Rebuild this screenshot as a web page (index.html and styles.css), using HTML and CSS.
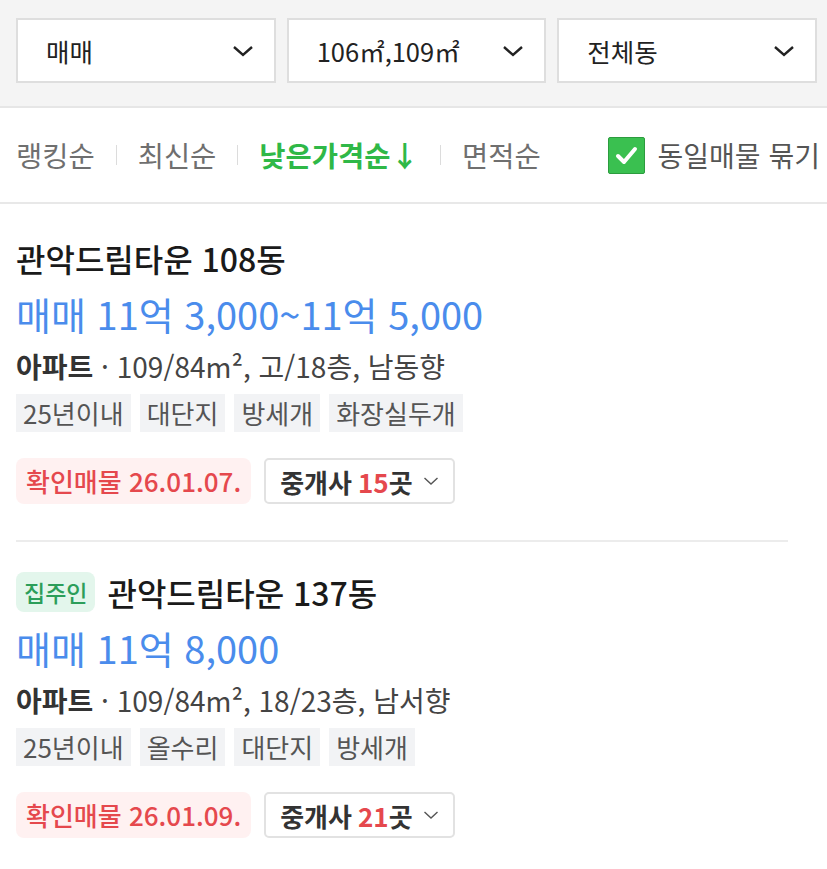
FILE: index.html
```html
<!DOCTYPE html>
<html lang="ko">
<head>
<meta charset="utf-8">
<title>매물 목록</title>
<link rel="stylesheet" href="styles.css">
</head>
<body>
<div class="page">
  <div class="filters">
    <div class="select"><span>매매</span><svg class="chev" viewBox="0 0 22 12" width="22" height="12"><path d="M2 2 L11 10 L20 2" fill="none" stroke="#222" stroke-width="2.4"/></svg></div>
    <div class="select"><span>106㎡,109㎡</span><svg class="chev" viewBox="0 0 22 12" width="22" height="12"><path d="M2 2 L11 10 L20 2" fill="none" stroke="#222" stroke-width="2.4"/></svg></div>
    <div class="select"><span>전체동</span><svg class="chev" viewBox="0 0 22 12" width="22" height="12"><path d="M2 2 L11 10 L20 2" fill="none" stroke="#222" stroke-width="2.4"/></svg></div>
  </div>
  <div class="sortbar">
    <div class="sorts">
      <span class="sort">랭킹순</span><span class="sep"></span>
      <span class="sort">최신순</span><span class="sep"></span>
      <span class="sort active">낮은가격순↓</span><span class="sep"></span>
      <span class="sort">면적순</span>
    </div>
    <label class="group">
      <span class="checkbox"><svg viewBox="0 0 37 37" width="37" height="37"><path d="M10 19 L16 25 L27 12" fill="none" stroke="#fff" stroke-width="4" stroke-linecap="round" stroke-linejoin="round"/></svg></span>
      <span>동일매물 묶기</span>
    </label>
  </div>
  <div class="list">
    <div class="item first">
      <div class="title">관악드림타운 108동</div>
      <div class="price">매매 11억 3,000~11억 5,000</div>
      <div class="info"><b>아파트</b> · 109/84m², 고/18층, 남동향</div>
      <div class="tags"><span class="tag">25년이내</span><span class="tag">대단지</span><span class="tag">방세개</span><span class="tag">화장실두개</span></div>
      <div class="actions">
        <span class="confirmed">확인매물 26.01.07.</span>
        <span class="broker">중개사 <em>15</em>곳<svg class="schev" viewBox="0 0 16 10" width="16" height="10"><path d="M1.5 2 L8 8 L14.5 2" fill="none" stroke="#555" stroke-width="1.4"/></svg></span>
      </div>
    </div>
    <div class="item">
      <div class="title"><span class="owner">집주인</span>관악드림타운 137동</div>
      <div class="price">매매 11억 8,000</div>
      <div class="info"><b>아파트</b> · 109/84m², 18/23층, 남서향</div>
      <div class="tags"><span class="tag">25년이내</span><span class="tag">올수리</span><span class="tag">대단지</span><span class="tag">방세개</span></div>
      <div class="actions">
        <span class="confirmed">확인매물 26.01.09.</span>
        <span class="broker">중개사 <em>21</em>곳<svg class="schev" viewBox="0 0 16 10" width="16" height="10"><path d="M1.5 2 L8 8 L14.5 2" fill="none" stroke="#555" stroke-width="1.4"/></svg></span>
      </div>
    </div>
  </div>
</div>
</body>
</html>
```

FILE: styles.css
```css
* { box-sizing: border-box; }
html, body { margin: 0; padding: 0; background: #fff; }
body {
  font-family: "Noto Sans CJK KR", "Noto Sans", sans-serif;
  color: #222;
  width: 827px;
  overflow: hidden;
}
.filters {
  display: flex;
  gap: 11px;
  padding: 18px 10px 23px 16px;
  background: #f4f4f4;
  border-bottom: 2px solid #e6e6e6;
}
.select {
  flex: 1;
  height: 65px;
  background: #fff;
  border: 2px solid #dedede;
  display: flex;
  align-items: center;
  justify-content: space-between;
  padding: 0 20px 0 28px;
  font-size: 25.5px;
  color: #222;
}
.chev { display: block; }
.sortbar {
  display: flex;
  align-items: center;
  justify-content: space-between;
  height: 96px;
  padding: 0 7px 0 16px;
  border-bottom: 2px solid #e8e8e8;
}
.sorts { display: flex; align-items: center; }
.sort { font-size: 28.5px; color: #6f6f6f; line-height: 34px; }
.sort.active { color: #2fb847; font-weight: 700; }
.sep { width: 1px; height: 20px; background: #dcdcdc; margin: 0 21px; }
.group { display: flex; align-items: center; gap: 13px; font-size: 28px; color: #555; }
.checkbox {
  width: 37px; height: 37px;
  background: #3ac050;
  border: 1px solid #2c9c3e;
  border-radius: 2px;
  display: flex;
}
.checkbox svg { display: block; margin: -1px; }
.list { padding: 0 39px 0 16px; }
.item { padding: 34px 0 36px; border-bottom: 2px solid #ececec; }
.item:last-child { border-bottom: none; padding-top: 30px; }
.title {
  display: flex;
  align-items: center;
  font-size: 32px;
  font-weight: 500;
  line-height: 40px;
  color: #1a1a1a;
}
.owner {
  font-size: 23px;
  font-weight: 500;
  color: #2c9e5a;
  background: #e3f6ec;
  border-radius: 8px;
  padding: 0 8px;
  height: 40px;
  line-height: 40px;
  margin-right: 12px;
}
.price {
  margin-top: 10px;
  font-size: 38px;
  line-height: 52px;
  color: #4a8cec;
}
.info {
  margin-top: 6px;
  font-size: 28px;
  line-height: 40px;
  color: #444;
}
.info b { font-weight: 700; color: #333; }
.tags { display: flex; gap: 9px; margin-top: 8px; }
.tag {
  background: #f2f3f5;
  color: #555;
  font-size: 26px;
  line-height: 38px;
  padding: 0 7px;
}
.actions { display: flex; gap: 13px; margin-top: 26px; }
.confirmed {
  background: #fff1f1;
  color: #e5484d;
  font-size: 26px;
  font-weight: 500;
  line-height: 46px;
  height: 46px;
  padding: 0 10px;
  border-radius: 8px;
}
.broker {
  display: flex;
  align-items: center;
  height: 46px;
  border: 2px solid #e2e2e2;
  border-radius: 5px;
  padding: 0 14px;
  font-size: 26px;
  font-weight: 700;
  color: #333;
}
.broker em { font-style: normal; color: #e5484d; margin: 0 0 0 6px; }
.schev { margin-left: 10px; display: block; }
```
